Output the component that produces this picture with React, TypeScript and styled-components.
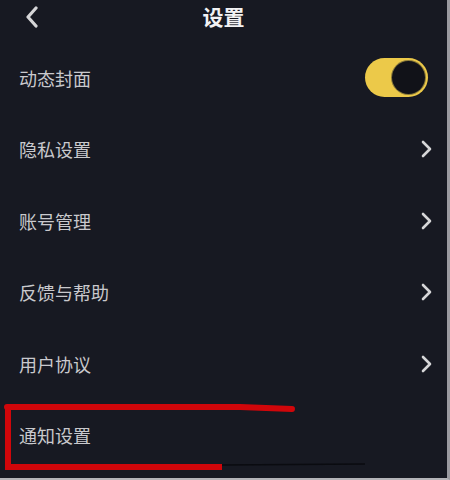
import styled, { createGlobalStyle } from 'styled-components';

const GlobalStyle = createGlobalStyle`
    html, body {
        margin: 0;
        padding: 0;
        background: #171922;
    }
    body {
        font-family: "Noto Sans CJK SC", "Noto Sans", sans-serif;
    }
`;

interface SettingItem {
    label: string,
    kind: 'toggle' | 'link' | 'plain',
}

const items: SettingItem[] = [
    { label: '动态封面', kind: 'toggle' },
    { label: '隐私设置', kind: 'link' },
    { label: '账号管理', kind: 'link' },
    { label: '反馈与帮助', kind: 'link' },
    { label: '用户协议', kind: 'link' },
    { label: '通知设置', kind: 'plain' },
];

const Chevron = ({ dir }: { dir: 'left' | 'right' }) => (
    <svg width="14" height="22" viewBox="0 0 14 22">
        <path
            d={dir === 'left' ? 'M11 2 L3 11 L11 20' : 'M3 4 L10 11 L3 18'}
            fill="none"
            stroke="#d6d6d8"
            strokeWidth={dir === 'left' ? 3.2 : 2.6}
            strokeLinecap="round"
            strokeLinejoin="round"
        />
    </svg>
);

const App = () => {
    return (
        <>
            <GlobalStyle />
            <Screen>
                <Header>
                    <BackButton>
                        <Chevron dir="left" />
                    </BackButton>
                    <Title>设置</Title>
                </Header>
                <List>
                    {items.map(item => (
                        <Row key={item.label}>
                            <Label>{item.label}</Label>
                            {item.kind === 'toggle' && (
                                <Toggle>
                                    <Knob />
                                </Toggle>
                            )}
                            {item.kind === 'link' && (
                                <Arrow>
                                    <Chevron dir="right" />
                                </Arrow>
                            )}
                        </Row>
                    ))}
                </List>
                <Mark viewBox="0 0 450 480" preserveAspectRatio="none">
                    <path d="M7 407 L240 407 L292 409" stroke="#d0060a" strokeWidth="6" fill="none" strokeLinecap="round" />
                    <path d="M8 405 L8 467 L222 467" stroke="#d0060a" strokeWidth="6" fill="none" />
                    <path d="M222 465 L365 464" stroke="#0a0b10" strokeWidth="1.5" fill="none" />
                </Mark>
            </Screen>
        </>
    );
};

const Screen = styled.div`
    position: relative;
    width: 450px;
    height: 480px;
    box-sizing: border-box;
    overflow: hidden;
    background-color: #171922;
    border-right: 3px solid #9a9aa0;
    border-bottom: 2px solid #b4b4b8;
`;

const Header = styled.header`
    position: relative;
    height: 42px;
    display: flex;
    align-items: center;
    justify-content: center;
`;

const BackButton = styled.div`
    position: absolute;
    left: 25px;
    top: 6px;
    display: flex;
`;

const Title = styled.h1`
    margin: 0;
    margin-top: -10px;
    font-size: 21px;
    font-weight: 700;
    color: #f2f2f4;
    letter-spacing: 0;
`;

const List = styled.ul`
    margin: 0;
    padding: 0;
    list-style: none;
`;

const Row = styled.li`
    height: 71.5px;
    display: flex;
    align-items: center;
    justify-content: space-between;
    padding: 0 19px 0 19px;
`;

const Label = styled.span`
    font-size: 18px;
    color: #c9c9cd;
`;

const Arrow = styled.span`
    display: flex;
    margin-right: -6px;
`;

const Toggle = styled.span`
    width: 63px;
    height: 39px;
    border-radius: 20px;
    background-color: #ecc949;
    display: flex;
    align-items: center;
    justify-content: flex-end;
    padding: 0 3px;
    box-sizing: border-box;
`;

const Knob = styled.span`
    width: 33px;
    height: 33px;
    border-radius: 50%;
    background-color: #111218;
    box-shadow: 0 0 0 1px #8a7a3a;
`;

const Mark = styled.svg`
    position: absolute;
    inset: 0;
    width: 450px;
    height: 480px;
    pointer-events: none;
`;

export default App;
